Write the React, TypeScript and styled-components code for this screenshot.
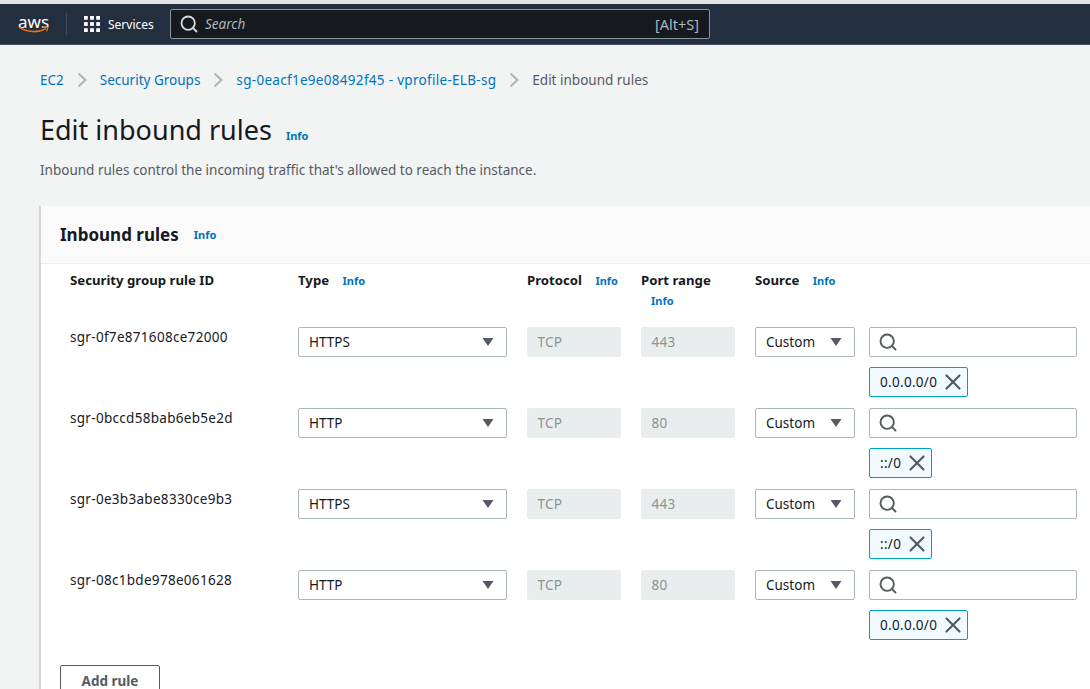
import React from 'react';
import styled, {createGlobalStyle} from 'styled-components';
import {Search, X} from 'lucide-react';

const rules = [
    {id: 'sgr-0f7e871608ce72000', type: 'HTTPS', port: '443', cidr: '0.0.0.0/0'},
    {id: 'sgr-0bccd58bab6eb5e2d', type: 'HTTP', port: '80', cidr: '::/0'},
    {id: 'sgr-0e3b3abe8330ce9b3', type: 'HTTPS', port: '443', cidr: '::/0'},
    {id: 'sgr-08c1bde978e061628', type: 'HTTP', port: '80', cidr: '0.0.0.0/0'},
];

const crumbs = ['EC2', 'Security Groups', 'sg-0eacf1e9e08492f45 - vprofile-ELB-sg'];

const Chevron = () => (
    <CrumbSep width="10" height="16" viewBox="0 0 10 16" fill="none">
        <path d="M1.5 1.5 L8.5 8 L1.5 14.5" stroke="#aab7b8" strokeWidth="2"/>
    </CrumbSep>
);

const Caret = () => (
    <svg width="12" height="8" viewBox="0 0 12 8"><path d="M0.5 0 H11.5 L6 8 Z" fill="#545b64"/></svg>
);

function App() {
    return (
        <Page>
            <GlobalStyle/>
            <TopBar>
                <AwsLogo>
                    <AwsText>aws</AwsText>
                    <svg width="31" height="8" viewBox="0 0 31 8" fill="none">
                        <path d="M1 1.2 C9 6.5 20 7 28 2.6" stroke="#ec7211" strokeWidth="1.6"/>
                        <path d="M25 1.4 L30 1 L28.6 5.4" stroke="#ec7211" strokeWidth="1.3"/>
                    </svg>
                </AwsLogo>
                <NavDivider/>
                <ServicesButton>
                    <svg width="16" height="16" viewBox="0 0 17 17" fill="#fff">
                        {[0, 6.5, 13].map(y => [0, 6.5, 13].map(x => (
                            <rect key={`${x}-${y}`} x={x} y={y} width="4" height="4"/>
                        )))}
                    </svg>
                    Services
                </ServicesButton>
                <SearchBar>
                    <Search size={20} color="#d5dbdb" strokeWidth={2.2}/>
                    <SearchHint>Search</SearchHint>
                    <Shortcut>[Alt+S]</Shortcut>
                </SearchBar>
            </TopBar>
            <Content>
                <Breadcrumbs>
                    {crumbs.map((c, i) => (
                        <React.Fragment key={c}>
                            <CrumbLink $wide={i === 2}>{c}</CrumbLink>
                            <Chevron/>
                        </React.Fragment>
                    ))}
                    <CrumbCurrent>Edit inbound rules</CrumbCurrent>
                </Breadcrumbs>
                <TitleRow>
                    <Title>Edit inbound rules</Title>
                    <InfoLink>Info</InfoLink>
                </TitleRow>
                <Description>Inbound rules control the incoming traffic that's allowed to reach the instance.</Description>
                <Card>
                    <CardHeader>
                        <CardTitle>Inbound rules</CardTitle>
                        <InfoLink>Info</InfoLink>
                    </CardHeader>
                    <CardBody>
                        <HeaderGrid>
                            <ColLabel>Security group rule ID</ColLabel>
                            <ColLabel>Type <InfoLink>Info</InfoLink></ColLabel>
                            <ColLabel>Protocol <InfoLink>Info</InfoLink></ColLabel>
                            <ColLabel>Port range <InfoBlock>Info</InfoBlock></ColLabel>
                            <ColLabel>Source <InfoLink>Info</InfoLink></ColLabel>
                        </HeaderGrid>
                        {rules.map(r => (
                            <RuleGrid key={r.id}>
                                <RuleId>{r.id}</RuleId>
                                <Select>{r.type}<Caret/></Select>
                                <ReadOnly>TCP</ReadOnly>
                                <ReadOnly>{r.port}</ReadOnly>
                                <Select>Custom<Caret/></Select>
                                <SourceCol>
                                    <SearchInput><Search size={20} color="#545b64" strokeWidth={2.3}/></SearchInput>
                                    <Chip>{r.cidr}<X size={26} color="#545b64" strokeWidth={2}/></Chip>
                                </SourceCol>
                            </RuleGrid>
                        ))}
                        <AddRule>Add rule</AddRule>
                    </CardBody>
                </Card>
            </Content>
        </Page>
    );
}

const GlobalStyle = createGlobalStyle`
    html, body {
        margin: 0;
        height: 689px;
        overflow: hidden;
        background: #f2f3f3;
        font-family: "Noto Sans", "Open Sans", sans-serif;
        font-size: 14px;
        color: #16191f;
    }
`
const Page = styled.div`
    width: 1090px;
    height: 689px;
    overflow: hidden;
    border-top: 4px solid #e4e6e6;
    box-sizing: border-box;
`
const TopBar = styled.header`
    height: 41px;
    box-sizing: border-box;
    background: #232f3e;
    border-bottom: 1px solid #414d5c;
    display: flex;
    align-items: center;
    padding-left: 18px;
`
const AwsLogo = styled.div`
    width: 31px;
    display: flex;
    flex-direction: column;
    align-items: center;
    margin-top: -2px;
    svg { margin-top: -5px; }
`
const AwsText = styled.span`
    color: #fff;
    font-size: 17px;
    line-height: 19px;
`
const NavDivider = styled.div`
    width: 1px;
    height: 22px;
    background: #414d5c;
    margin: 0 17px;
`
const ServicesButton = styled.div`
    display: flex;
    align-items: center;
    gap: 8px;
    color: #fff;
    font-size: 12px;
    width: 86px;
`
const SearchBar = styled.div`
    width: 540px;
    height: 30px;
    box-sizing: border-box;
    background: #16191f;
    border: 1px solid #879596;
    border-radius: 2px;
    display: flex;
    align-items: center;
    padding: 0 10px 0 8px;
    gap: 6px;
`
const SearchHint = styled.span`
    color: #aab7b8;
    font-style: italic;
    font-size: 13.5px;
    flex: 1;
`
const Shortcut = styled.span`
    color: #aab7b8;
    font-size: 14.5px;
`
const Content = styled.main`
    padding: 25px 0 0 40px;
`
const Breadcrumbs = styled.nav`
    display: flex;
    align-items: center;
    height: 20px;
    gap: 13px;
    font-size: 13.5px;
`
const CrumbLink = styled.a<{$wide?: boolean}>`
    color: #0073bb;
    letter-spacing: ${p => (p.$wide ? '0.3px' : '0')};
`
const CrumbSep = styled.svg`
    flex: none;
`
const CrumbCurrent = styled.span`
    color: #545b64;
`
const TitleRow = styled.div`
    display: flex;
    align-items: baseline;
    gap: 4px;
    margin-top: 20px;
`
const Title = styled.h1`
    margin: 0;
    font-size: 27px;
    line-height: 40px;
    font-weight: 400;
`
const InfoLink = styled.a`
    color: #0073bb;
    font-size: 11px;
    font-weight: 700;
    margin-left: 10px;
`
const InfoBlock = styled(InfoLink)`
    display: block;
    margin: 1px 0 0 10px;
`
const Description = styled.p`
    margin: 10px 0 0;
    font-size: 13.5px;
    line-height: 20px;
    color: #545b64;
`
const Card = styled.section`
    margin-top: 26px;
    width: 1060px;
    background: #fff;
    border-left: 2px solid #d5d7d7;
    margin-left: -1px;
`
const CardHeader = styled.div`
    height: 58px;
    box-sizing: border-box;
    background: #fafafa;
    border-bottom: 1px solid #eaeded;
    display: flex;
    align-items: center;
    padding-left: 19px;
    gap: 5px;
`
const CardTitle = styled.h2`
    margin: 0;
    font-size: 17px;
    font-weight: 700;
`
const CardBody = styled.div`
    padding: 6px 0 0 19px;
    height: 430px;
`
const HeaderGrid = styled.div`
    display: grid;
    grid-template-columns: 228px 229px 114px 114px 322px;
    padding-left: 10px;
    height: 57px;
`
const ColLabel = styled.div`
    font-size: 13.2px;
    font-weight: 700;
    line-height: 20px;
    white-space: nowrap;
`
const RuleGrid = styled.div`
    display: grid;
    grid-template-columns: 228px 209px 94px 94px 100px 208px;
    padding-left: 10px;
    height: 81px;
    & > *:nth-child(3) { margin-left: 20px; width: 94px; }
    & > *:nth-child(4) { margin-left: 40px; width: 94px; }
    & > *:nth-child(5) { margin-left: 60px; width: 100px; }
    & > *:nth-child(6) { margin-left: 74px; width: 208px; }
`
const RuleId = styled.div`
    font-size: 13.5px;
    line-height: 20px;
    letter-spacing: 0.3px;
`
const Select = styled.div`
    height: 30px;
    box-sizing: border-box;
    border: 1px solid #aab7b8;
    border-radius: 2px;
    background: #fff;
    display: flex;
    align-items: center;
    justify-content: space-between;
    padding: 0 12px 0 10px;
    font-size: 13.5px;
`
const ReadOnly = styled.div`
    height: 30px;
    box-sizing: border-box;
    background: #eaeded;
    border-radius: 2px;
    display: flex;
    align-items: center;
    padding-left: 10.5px;
    font-size: 13.5px;
    letter-spacing: 0.3px;
    color: #879596;
`
const SourceCol = styled.div`
    display: flex;
    flex-direction: column;
    align-items: flex-start;
    gap: 10px;
`
const SearchInput = styled.div`
    width: 100%;
    height: 30px;
    box-sizing: border-box;
    border: 1px solid #aab7b8;
    border-radius: 2px;
    display: flex;
    align-items: center;
    padding-left: 8px;
`
const Chip = styled.div`
    height: 30px;
    box-sizing: border-box;
    border: 1px solid #00a1c9;
    border-radius: 2px;
    background: #f1faff;
    display: flex;
    align-items: center;
    gap: 3px;
    padding: 0 1px 0 10px;
    font-size: 13.5px;
    letter-spacing: 0.3px;
`
const AddRule = styled.button`
    display: block;
    margin-top: 14px;
    width: 100px;
    height: 32px;
    background: #fff;
    border: 1px solid #545b64;
    border-radius: 2px;
    color: #545b64;
    font-family: inherit;
    font-size: 13.5px;
    font-weight: 700;
`
export default App;
